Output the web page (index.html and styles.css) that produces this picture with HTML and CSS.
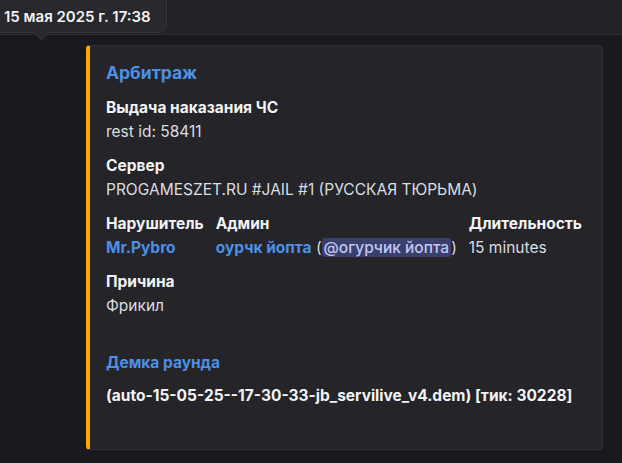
FILE: index.html
```html
<!DOCTYPE html>
<html lang="ru">
<head>
<meta charset="utf-8">
<link rel="stylesheet" href="styles.css">
</head>
<body>
<div class="band">
  <div class="tooltip">15 мая 2025 г. 17:38<span class="arrow"></span></div>
</div>
<div class="message">
  <div class="embed">
    <div class="title">Арбитраж</div>
    <div class="field">
      <div class="fname">Выдача наказания ЧС</div>
      <div class="fval">rest id: 58411</div>
    </div>
    <div class="field">
      <div class="fname">Сервер</div>
      <div class="fval">PROGAMESZET.RU #JAIL #1 (РУССКАЯ ТЮРЬМА)</div>
    </div>
    <div class="row">
      <div class="field">
        <div class="fname">Нарушитель</div>
        <div class="fval link">Mr.Pybro</div>
      </div>
      <div class="field">
        <div class="fname">Админ</div>
        <div class="fval"><span class="link">оурчк йопта</span> (<span class="mention">@огурчик йопта</span>)</div>
      </div>
      <div class="field">
        <div class="fname">Длительность</div>
        <div class="fval">15 minutes</div>
      </div>
    </div>
    <div class="field">
      <div class="fname">Причина</div>
      <div class="fval">Фрикил</div>
    </div>
    <div class="demo-title">Демка раунда</div>
    <div class="demo-val">(auto-15-05-25--17-30-33-jb_servilive_v4.dem) [тик: 30228]</div>
  </div>
</div>
</body>
</html>
```
FILE: styles.css
```css
html, body {
  margin: 0;
  background: #1a1a1e;
}
body {
  font-family: Inter, "Noto Sans", sans-serif;
  color: #dbdee1;
  width: 622px;
  height: 463px;
  overflow: hidden;
}
.band {
  position: relative;
  height: 34px;
  background: #222226;
  border-bottom: 1px solid #2b2b30;
}
.tooltip {
  position: absolute;
  left: -8px;
  top: -8px;
  height: 41px;
  padding: 8px 15px 0 11px;
  box-sizing: border-box;
  display: flex;
  align-items: center;
  background: #28282d;
  border: 1px solid #34343a;
  border-radius: 8px;
  color: #f2f3f5;
  font-weight: 600;
  font-size: 15px;
  white-space: nowrap;
}
.arrow {
  position: absolute;
  left: 43px;
  bottom: -6px;
  width: 10px;
  height: 10px;
  background: #28282d;
  border-right: 1px solid #34343a;
  border-bottom: 1px solid #34343a;
  transform: rotate(45deg);
}
.message {
  padding: 10px 19px 0 86px;
}
.embed {
  box-sizing: border-box;
  height: 405px;
  background: #242429;
  border: 1px solid #303036;
  border-left: 4px solid #ffa800;
  border-radius: 4px;
  padding: 15px 16px 0 16px;
  display: flex;
  flex-direction: column;
}
.title {
  color: #4e90e6;
  font-weight: 700;
  font-size: 17.5px;
  line-height: 24px;
  margin-bottom: 11px;
}
.field {
  margin-bottom: 10px;
}
.row {
  display: flex;
  gap: 12px;
}
.fname {
  color: #f2f3f5;
  font-weight: 700;
  font-size: 15.5px;
  line-height: 24px;
}
.fval {
  font-size: 15.5px;
  line-height: 24px;
}
.link {
  color: #4e90e6;
  font-weight: 700;
}
.mention {
  background: #3a3f6c;
  color: #c3c8f5;
  border-radius: 3px;
  padding: 0 2px;
  font-weight: 500;
}
.demo-title {
  margin-top: 23px;
  color: #4e90e6;
  font-weight: 700;
  font-size: 15.5px;
  line-height: 24px;
}
.demo-val {
  margin-top: 9px;
  color: #f2f3f5;
  font-weight: 700;
  font-size: 15.5px;
  line-height: 24px;
}
```
